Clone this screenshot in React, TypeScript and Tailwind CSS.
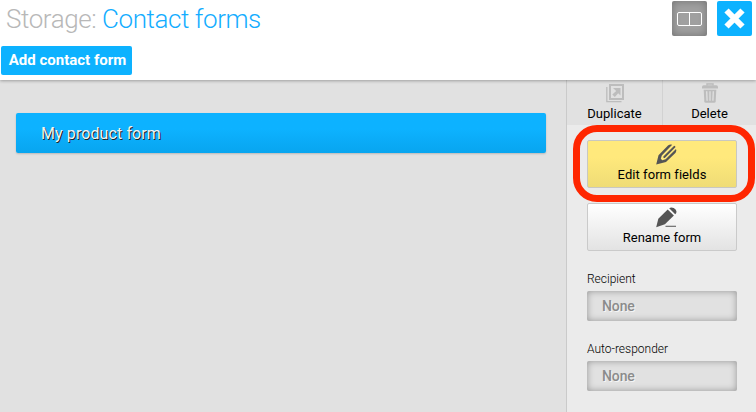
import React from "react";

function DuplicateIcon() {
  return (
    <svg width="18" height="19" viewBox="0 0 18 19" fill="none" className="block">
      <path d="M.8 3v14.700H15.500" stroke="#bdbdbd" strokeWidth="1.300" />
      <rect x="4" y="1" width="13" height="14" stroke="#bdbdbd" strokeWidth="2" />
      <path d="M7 4h7.500v7.500l-2.300-2.300-3.400 3.800-2.500-2.500 3.900-3.400z" fill="#bdbdbd" />
    </svg>
  );
}

function TrashIcon() {
  return (
    <svg width="16" height="20" viewBox="0 0 16 20" fill="none" className="block">
      <path d="M5 2.5V.9h6v1.6" stroke="#bdbdbd" strokeWidth="1.5" />
      <path d="M0 5.4V4q0-1.7 1.7-1.7h12.6Q16 2.300 16 4v1.400z" fill="#bdbdbd" />
      <path d="M1.700 6.700h12.600l-.6 11.500q-.1 1.500-1.500 1.500H3.800q-1.400 0-1.500-1.500z" fill="#bdbdbd" />
      <path d="M4.700 8.300l.4 9.500M8 8.300v9.500M11.300 8.300l-.4 9.500" stroke="#e1e1e1" strokeWidth="1.300" />
    </svg>
  );
}

function DoublePencilIcon() {
  return (
    <svg width="21" height="21" viewBox="0 0 21 21" fill="none" className="ml-2 block">
      <path d="M.2 20.500L2.500 11.300 12 1.500q2-1.400 4.200-.7L5.800 11.500l-1 3.200 1.500 1.500 3.300-1L20 5q.9 1.900-.4 3.700L10 18z" fill="#555" />
      <path d="M8.300 13L18.400 2.900" stroke="#555" strokeWidth="2" strokeLinecap="round" />
    </svg>
  );
}

function PencilIcon() {
  return (
    <svg width="21" height="21" viewBox="0 0 21 21" className="ml-2 block">
      <path d="M.2 20.200L2.300 11.800 11.700 2.400l6.200 6L8.900 17.300z" fill="#555" />
      <path d="M13.200 1.200q2-1.500 4.600-.1 3.700 2.100 2.300 5.100l-.9 1.100z" fill="#555" />
      <path d="M9.500 18.700H20v1.300H9.500z" fill="#777" />
    </svg>
  );
}

function Field({ label, value }: { label: string; value: string }) {
  return (
    <div className="flex flex-col">
      <div className="h-[25px] pt-[5px] text-[12px] font-light leading-4 text-black">{label}</div>
      <div className="h-[30px] rounded-[2px] bg-[#e1e1e1] pl-[15px] text-[14px] font-medium leading-[31px] tracking-[-0.1px] text-[#8b8b8b] shadow-[inset_0_0_7px_rgba(0,0,0,0.34)] [text-shadow:1px_1px_0_#f5f5f5]">
        {value}
      </div>
    </div>
  );
}

export default function App() {
  return (
    <div className="flex h-[412px] w-[756px] flex-col overflow-hidden bg-[#e1e1e1] font-['Roboto',sans-serif]">
      <header className="z-10 flex h-20 shrink-0 justify-between bg-white pr-1 shadow-[0_1px_3px_rgba(0,0,0,0.3)]">
        <div className="flex flex-col items-start">
          <h1 className="h-[46px] pl-[6px] pt-[3px] text-[26px] font-light leading-8 tracking-[-0.43px] text-[#b8b8b8]">
            Storage: <span className="text-[#14adff]">Contact forms</span>
          </h1>
          <button className="ml-px h-[29px] w-[131px] whitespace-nowrap rounded-[2px] bg-[#0db2ff] pl-[2px] text-center text-[15px] font-bold leading-[27px] text-white">
            Add contact form
          </button>
        </div>
        <div className="flex gap-[10px] pt-px">
          <button className="flex size-[35px] items-center justify-center rounded-[2px] bg-[#a0a0a0] shadow-[inset_0_0_8px_rgba(0,0,0,0.3)]">
            <svg width="25" height="14" viewBox="0 0 25 14" fill="none">
              <rect x=".5" y=".5" width="24" height="13" rx="1.500" stroke="white" />
              <path d="M12.500 1v12" stroke="white" />
            </svg>
          </button>
          <button className="flex size-[35px] items-center justify-center rounded-[2px] bg-[#0db2ff]">
            <svg width="21" height="21" viewBox="0 0 21 21">
              <path d="M2.500 2.500l16 16M18.500 2.500l-16 16" stroke="white" strokeWidth="6" />
            </svg>
          </button>
        </div>
      </header>
      <div className="flex flex-1">
        <main className="w-[566px] pl-4 pt-[33px]">
          <div className="h-10 w-[530px] rounded-[2px] bg-linear-to-b from-[#0db2ff] from-40% to-[#08a5ef] pl-[25px] text-[16px] leading-[41px] tracking-[0.1px] text-[#f2f2f2] shadow-[0_1px_2px_rgba(0,0,0,0.18)] [text-shadow:1px_1px_0_#222]">
            My product form
          </div>
        </main>
        <aside className="flex w-[190px] flex-col border-l border-[#cacaca] bg-[#ebebeb]">
          <div className="flex h-[45px] bg-[#e1e1e1] text-[13px] leading-4 text-black">
            <button className="flex w-24 flex-col items-center border-r border-[#d2d2d2] pt-1">
              <DuplicateIcon />
              <span className="mt-[3px]">Duplicate</span>
            </button>
            <button className="flex w-[93px] flex-col items-center pt-[3px]">
              <TrashIcon />
              <span className="mt-[3px]">Delete</span>
            </button>
          </div>
          <div className="flex flex-col px-5 pt-[15px] text-[13px] leading-4 text-black">
            <div className="relative w-[150px]">
              <button className="flex h-12 w-[150px] flex-col items-center rounded-[2px] border border-[#c9c8c0] bg-linear-to-b from-[#ffe97c] from-35% to-[#efdc76] pt-[3px]">
                <DoublePencilIcon />
                <span className="mt-[2px] tracking-[0.05px]">Edit form fields</span>
              </button>
              <div className="pointer-events-none absolute -left-[14px] -top-[15px] z-20 h-[77px] w-[182px] rounded-[24px] border-[7px] border-[#ff2600]" />
            </div>
            <button className="mt-[15px] flex h-12 w-[150px] flex-col items-center rounded-[2px] border border-[#cacaca] bg-linear-to-b from-white to-[#e3e3e3] pt-[3px]">
              <PencilIcon />
              <span className="mt-[2px]">Rename form</span>
            </button>
            <div className="mt-[15px] flex w-[150px] flex-col gap-[15px]">
              <Field label="Recipient" value="None" />
              <Field label="Auto-responder" value="None" />
            </div>
          </div>
        </aside>
      </div>
    </div>
  );
}
